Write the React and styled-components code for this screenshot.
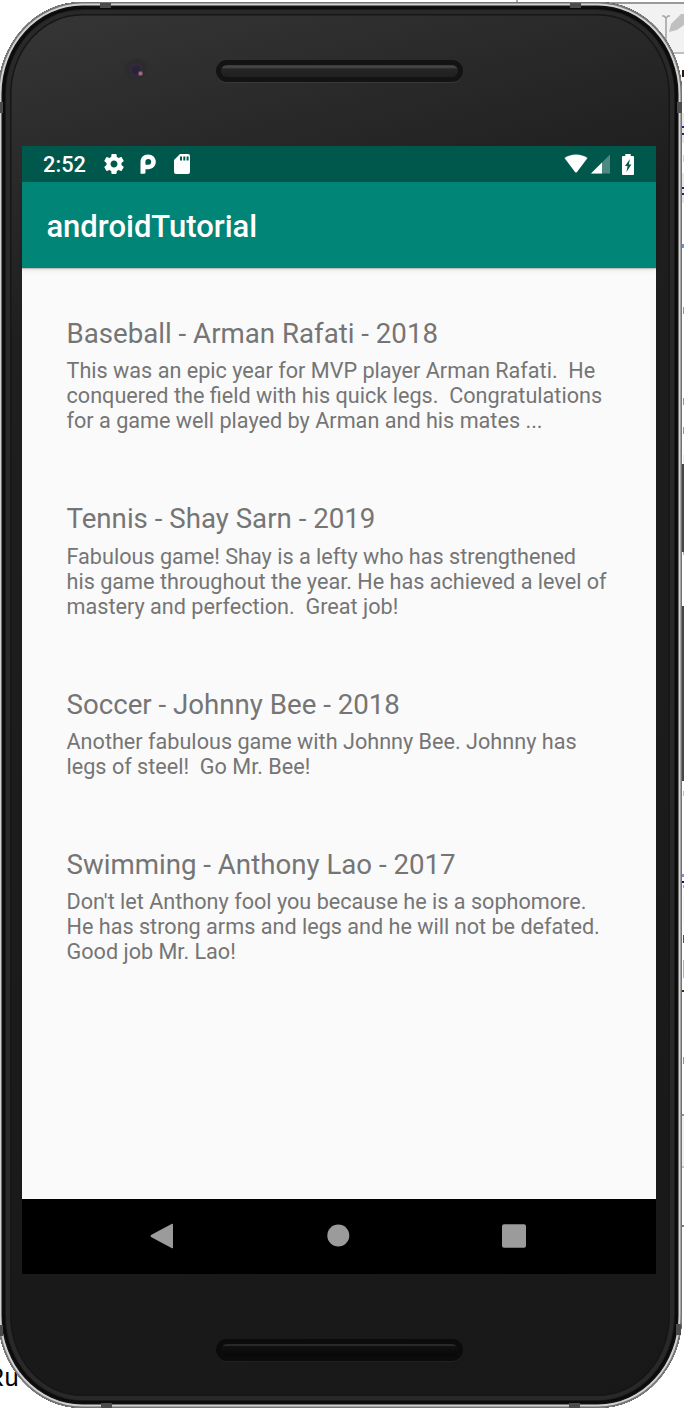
import React from 'react';
import styled, { createGlobalStyle } from 'styled-components';

const GlobalStyle = createGlobalStyle`
  * { box-sizing: border-box; }
  body { margin: 0; background: #fff; overflow: hidden; font-family: Roboto, sans-serif; }
`;

const Desktop = styled.div`
  position: relative;
  width: 684px;
  height: 1416px;
  overflow: hidden;
  padding-top: 2px;
  background: #fff;
`;

/* Editor window behind the emulator */
const EditorToolbar = styled.div`
  position: absolute;
  top: 0;
  left: 516px;
  right: 0;
  height: 54px;
  background: linear-gradient(#fff 0 2px, #999 2px 4px, #f2f2f2 4px 52px, #c0c0c0 52px 54px);
  border-left: 2px solid #aaa;
  svg { position: absolute; left: 143px; top: 11px; }
`;
const Gutter = styled.div`
  position: absolute;
  top: 0;
  right: 0;
  width: 3px;
  height: 1416px;
`;
const Mark = styled.i`
  position: absolute;
  right: 0;
  top: ${(p) => p.$y}px;
  width: ${(p) => p.$w || 2}px;
  height: ${(p) => p.$h}px;
  background: ${(p) => p.$c};
`;
const ConsoleText = styled.div`
  position: absolute;
  left: -14px;
  top: 1361px;
  font: 25.5px/32px "Liberation Sans", sans-serif;
  color: #000;
`;

const Phone = styled.div`
  position: relative;
  display: flex;
  flex-direction: column;
  width: 684px;
  height: 1406px;
  margin-left: -2px;
  padding: 0 26px 0 24px;
  border-radius: 84px / 92px;
  background: linear-gradient(165deg, #373737 0%, #2a2a2a 11%, #1e1e1e 22%, #1b1b1b 60%, #181818 100%);
  box-shadow:
    inset 0 0 0 1.5px #737373,
    inset 0 0 0 3.5px #d2d2d2,
    inset 0 0 0 5px #111,
    inset 0 0 0 7px #0b0b0b,
    inset 0 0 0 8px #191919,
    inset 0 0 0 12px #292929,
    inset 0 0 0 13.5px #161616;
`;
const Band = styled.i`
  position: absolute;
  left: ${(p) => p.$x}px;
  top: ${(p) => p.$y}px;
  width: ${(p) => (p.$side ? 5 : 11)}px;
  height: ${(p) => (p.$side ? 11 : 5)}px;
  background: #4b4b4b;
`;
const Bezel = styled.div`
  display: flex;
  justify-content: center;
  height: ${(p) => p.$h}px;
  padding-top: ${(p) => p.$top}px;
`;
const Speaker = styled.div`
  width: 247px;
  height: 22px;
  padding: 5px;
  border-radius: 11px;
  background: ${(p) => (p.$dark ? '#0b0b0b' : '#131313')};
  box-shadow: 0 1px 0 ${(p) => (p.$dark ? '#222' : '#383838')};
  &::before {
    content: '';
    display: block;
    height: 12px;
    border-radius: 6px;
    background: ${(p) =>
      p.$dark
        ? 'linear-gradient(#292929 0 2px, #111 2px, #070707)'
        : 'linear-gradient(#363636, #4a4a4a 2px, #393939 3px, #252525 4px, #202020)'};
  }
`;
const Camera = styled.i`
  position: absolute;
  left: 126px;
  top: 56px;
  width: 25px;
  height: 25px;
  border-radius: 50%;
  background:
    radial-gradient(circle at 16.5px 15.5px, #a5707a 0 1px, transparent 3px),
    radial-gradient(circle at 12px 12px, #2b2138 0 3px, #322b3c 6px, #2b2b2d 8px, #2e2e2e 12px);
`;

const Screen = styled.div`
  display: flex;
  flex-direction: column;
  width: 634px;
  height: 1128px;
  background: #fafafa;
`;
const StatusBar = styled.div`
  display: flex;
  align-items: center;
  height: 36px;
  padding: 0 22.5px 0 21px;
  background: #00574b;
  color: #fff;
  svg { display: block; flex: none; }
`;
const Clock = styled.span`
  width: 61px;
  font-size: 21.8px;
  font-weight: 500;
  line-height: 36px;
  padding-top: 1px;
`;
const Notices = styled.div`
  display: flex;
  align-items: center;
  gap: 15.5px;
  flex: 1;
`;
const Signals = styled.div`
  display: flex;
  align-items: center;
`;
const AppBar = styled.header`
  position: relative;
  height: 86px;
  padding: 0 24.4px;
  background: #008577;
  color: #fff;
  font-size: 31px;
  font-weight: 500;
  line-height: 89px;
  box-shadow: 0 1px 1px #00000030, 0 2px 5px #00000018;
`;
const List = styled.main`
  display: flex;
  flex-direction: column;
  flex: 1;
  gap: 70.2px;
  padding: 50px 0 0 44.5px;
  color: #757575;
`;
const Title = styled.h2`
  margin: 0 0 8.2px;
  font-size: 27.66px;
  font-weight: 400;
  line-height: 32px;
  white-space: pre;
`;
const Body = styled.p`
  margin: 0;
  font-size: 21.64px;
  line-height: 25px;
  white-space: pre;
`;
const NavBar = styled.nav`
  display: flex;
  align-items: center;
  height: 75px;
  padding: 0 0 2px 128px;
  background: #000;
`;
const NavIcon = styled.svg`
  display: block;
  width: 24px;
  height: 26px;
  fill: #9b9b9b;
  & + & { margin-left: 152px; }
`;

const games = [
  ['Baseball - Arman Rafati - 2018', 'This was an epic year for MVP player Arman Rafati.  He\nconquered the field with his quick legs.  Congratulations\nfor a game well played by Arman and his mates ...'],
  ['Tennis - Shay Sarn - 2019', 'Fabulous game! Shay is a lefty who has strengthened\nhis game throughout the year. He has achieved a level of\nmastery and perfection.  Great job!'],
  ['Soccer - Johnny Bee - 2018', 'Another fabulous game with Johnny Bee. Johnny has\nlegs of steel!  Go Mr. Bee!'],
  ['Swimming - Anthony Lao - 2017', "Don't let Anthony fool you because he is a sophomore.\nHe has strong arms and legs and he will not be defated.\nGood job Mr. Lao!"],
];

const marks = [
  [70, 7, '#2b1a10', 2], [113, 30, '#e9e9ea', 3], [126, 2, '#2b1b8c', 2], [133, 2, '#2b1b8c', 2],
  [155, 7, '#e6d3b5', 1], [173, 30, '#e9e9ea', 3], [187, 2, '#2b1b8c', 2], [193, 2, '#2b1b8c', 2],
  [244, 4, '#6f95c5', 2], [307, 7, '#b59355', 1], [398, 7, '#b59355', 1], [427, 7, '#b59355', 1],
  [455, 8, '#f4ead6', 1], [464, 88, '#464646', 3], [552, 3, '#c6ad7d', 1], [606, 175, '#464646', 3],
  [791, 5, '#d8c190', 1], [874, 3, '#8890cc', 2], [881, 2, '#10108c', 2], [885, 3, '#b9a0a0', 1],
  [895, 28, '#fcf3e0', 1], [935, 8, '#7b4a1e', 1], [960, 18, '#c9b083', 1], [990, 2, '#45300c', 2],
  [1057, 7, '#b59355', 1], [1114, 2, '#8c91b5', 2], [1116, 50, '#f1f1f1', 2], [1166, 2, '#c8c8c8', 2],
  [1225, 2, '#7b7b7b', 2],
];

const bands = [
  [102, 1], [572, 1], [103, 1401], [571, 1401],
  [0, 100, true], [679, 100, true], [0, 1323, true], [678, 1322, true],
];

export default function App() {
  return (
    <Desktop>
      <GlobalStyle />
      <EditorToolbar>
        <svg width="26" height="30" viewBox="0 0 26 30">
          <path d="M1 5h2l2 2 2-2h2M5 7v23" fill="none" stroke="#a5a5a5" strokeWidth="1.6" />
          <path d="M8 21l2-8L20 3l7 0v8L16 19z" fill="#c0c0c0" />
        </svg>
      </EditorToolbar>
      <Gutter>
        {marks.map(([y, h, c, w]) => <Mark key={y} $y={y} $h={h} $c={c} $w={w} />)}
      </Gutter>
      <ConsoleText>Ru</ConsoleText>
      <Phone>
        {bands.map(([x, y, side], i) => <Band key={i} $x={x} $y={y} $side={side} />)}
        <Camera />
        <Bezel $h={144} $top={58}><Speaker /></Bezel>
        <Screen>
          <StatusBar>
            <Clock>2:52</Clock>
            <Notices>
              <svg width="20" height="20" viewBox="2 2 20 20" fill="#fff">
                <path d="M19.43 12.98c.04-.32.07-.64.07-.98s-.03-.66-.07-.98l2.11-1.65c.19-.15.24-.42.12-.64l-2-3.46c-.12-.22-.39-.3-.61-.22l-2.49 1c-.52-.4-1.08-.73-1.69-.98l-.38-2.65C14.46 2.18 14.25 2 14 2h-4c-.25 0-.46.18-.49.42l-.38 2.65c-.61.25-1.17.59-1.69.98l-2.49-1c-.23-.09-.49 0-.61.22l-2 3.46c-.13.22-.07.49.12.64l2.11 1.65c-.04.32-.07.65-.07.98s.03.66.07.98l-2.11 1.65c-.19.15-.24.42-.12.64l2 3.46c.12.22.39.3.61.22l2.49-1c.52.4 1.08.73 1.69.98l.38 2.65c.03.24.24.42.49.42h4c.25 0 .46-.18.49-.42l.38-2.65c.61-.25 1.17-.59 1.69-.98l2.49 1c.23.09.49 0 .61-.22l2-3.46c.12-.22.07-.49-.12-.64l-2.11-1.65zM12 15.5c-1.93 0-3.5-1.57-3.5-3.5s1.57-3.5 3.5-3.5 3.5 1.57 3.5 3.5-1.57 3.5-3.5 3.5z" />
              </svg>
              <svg width="16" height="20" viewBox="0 0 16 20">
                <path fillRule="evenodd" d="M0.5 18.2V8.2C0.5 3.3 3.5.4 8 .4s7.8 3.1 7.8 7.4-3.2 7.4-7.6 7.4H5.5v3q0 1.6-1.6 1.6H.5zM5.5 10.7h2.8a2.9 2.9 0 1 0-2.9-2.9z" fill="#fff" />
              </svg>
              <svg width="18" height="20" viewBox="0 0 18 20" style={{ marginLeft: 1.5 }}>
                <path fillRule="evenodd" d="M7 0h8q2 0 2 2v16q0 2-2 2H3q-2 0-2-2V6zM7 2.5v4h2v-4zm3.3 0v4h2v-4zm3.3 0v4h2v-4z" fill="#fff" />
              </svg>
            </Notices>
            <Signals>
              <svg width="24" height="20" viewBox="0 0 24 20">
                <path d="M.5 4C6.7-.8 17.3-.8 23.5 4L13 18q-1 1-2 0z" fill="#fff" />
              </svg>
              <svg width="20" height="20" viewBox="0 0 20 20" style={{ marginLeft: 3 }}>
                <path d="M0 19.5L19 .5v19z" fill="#fff" fillOpacity=".3" />
                <path d="M0 19.5L11 8.5v11z" fill="#fff" />
              </svg>
              <svg width="12" height="21" viewBox="0 0 12 21" style={{ marginLeft: 11 }}>
                <path fillRule="evenodd" d="M3.3 0h5.4v2H11q1 0 1 1v17q0 1-1 1H1q-1 0-1-1V3q0-1 1-1h2.3zM8 5L3 12h2.6L4.4 18 9.4 10.4H6.8z" fill="#fff" />
              </svg>
            </Signals>
          </StatusBar>
          <AppBar>androidTutorial</AppBar>
          <List>
            {games.map(([title, body]) => (
              <article key={title}>
                <Title>{title}</Title>
                <Body>{body}</Body>
              </article>
            ))}
          </List>
          <NavBar>
            <NavIcon viewBox="0 0 24 26"><path d="M22 .8Q23 .3 23 1.5v23q0 1.2-1 .7L1 14q-1-1 0-2z" /></NavIcon>
            <NavIcon viewBox="0 0 24 26"><circle cx="12.3" cy="12.5" r="11" /></NavIcon>
            <NavIcon viewBox="0 0 24 26"><rect x="0" y="1.3" width="24" height="23.5" rx="2" /></NavIcon>
          </NavBar>
        </Screen>
        <Bezel $h={134} $top={65}><Speaker $dark /></Bezel>
      </Phone>
    </Desktop>
  );
}
